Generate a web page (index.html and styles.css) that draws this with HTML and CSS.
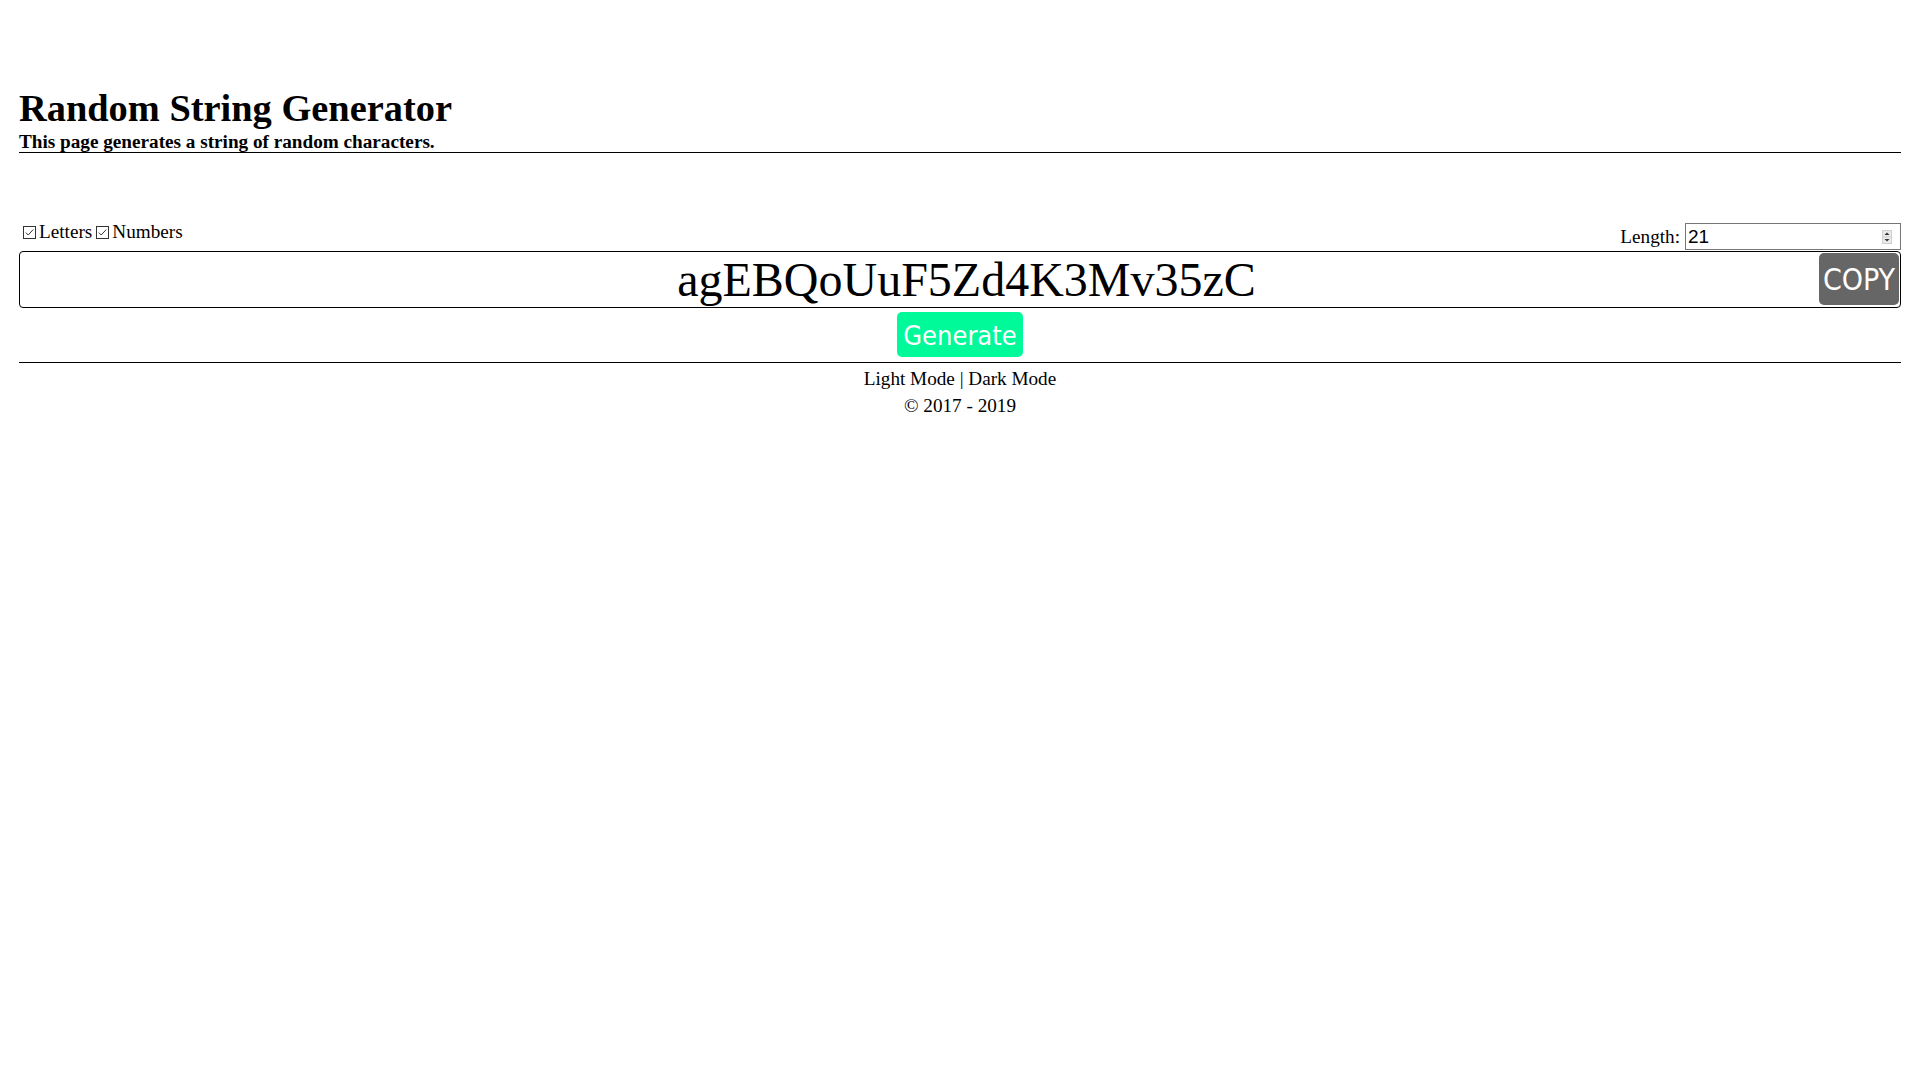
FILE: index.html
```html
<!DOCTYPE html>
<html lang="en">
<head>
<meta charset="utf-8">
<title>Random String Generator</title>
<link rel="stylesheet" href="styles.css">
</head>
<body>
<header class="page-header">
  <h1 class="title">Random String Generator</h1>
  <p class="subtitle">This page generates a string of random characters.</p>
</header>
<main class="generator">
  <div class="options-row">
    <div class="options">
      <label class="option"><span class="check"><svg width="13" height="13" viewBox="0 0 13 13"><rect x="0.5" y="0.5" width="12" height="12" fill="#fff" stroke="#333"/><path d="M2.8 6.6 L5.2 9 L10.2 3.6" fill="none" stroke="#333" stroke-width="1"/></svg></span>Letters</label>
      <label class="option"><span class="check"><svg width="13" height="13" viewBox="0 0 13 13"><rect x="0.5" y="0.5" width="12" height="12" fill="#fff" stroke="#333"/><path d="M2.8 6.6 L5.2 9 L10.2 3.6" fill="none" stroke="#333" stroke-width="1"/></svg></span>Numbers</label>
    </div>
    <div class="length">
      <span class="length-label">Length:</span>
      <div class="num-input">
        <span class="num-value">21</span>
        <span class="spinner"><svg width="10" height="14" viewBox="0 0 10 14"><rect x="0.5" y="0.5" width="9" height="13" fill="#eaeaea" stroke="#cfcfcf"/><line x1="0.5" y1="7" x2="9.5" y2="7" stroke="#cfcfcf"/><path d="M2.5 5 L5 2.5 L7.5 5 Z" fill="#333"/><path d="M2.5 9 L5 11.5 L7.5 9 Z" fill="#333"/></svg></span>
      </div>
    </div>
  </div>
  <div class="output-box">
    <span class="output-text">agEBQoUuF5Zd4K3Mv35zC</span>
    <button class="copy-btn">COPY</button>
  </div>
  <div class="generate-row">
    <button class="generate-btn">Generate</button>
  </div>
</main>
<footer class="page-footer">
  <div class="modes">Light Mode | Dark Mode</div>
  <div class="copyright">© 2017 - 2019</div>
</footer>
</body>
</html>
```
FILE: styles.css
```css
html, body {
  margin: 0;
  padding: 0;
  background: #fff;
}
body {
  padding: 0 19px;
  font-family: "Liberation Serif", "Times New Roman", serif;
  font-size: 19.2px;
  color: #000;
}
.page-header {
  padding-top: 86px;
  border-bottom: 1px solid #000;
}
.title {
  margin: 0;
  font-size: 38.4px;
  line-height: 44px;
  font-weight: bold;
}
.subtitle {
  margin: 0;
  padding-top: 1px;
  font-weight: bold;
  line-height: 21px;
}
.options-row {
  margin-top: 68px;
  display: flex;
  justify-content: space-between;
  align-items: flex-start;
  height: 29px;
}
.options {
  display: flex;
  line-height: 22px;
  padding-left: 4px;
}
.option {
  display: flex;
  align-items: baseline;
  margin-right: 4px;
}
.check {
  display: inline-block;
  width: 13px;
  height: 13px;
  margin-right: 3px;
  position: relative;
  top: 1px;
}
.check svg {
  display: block;
}
.length {
  display: flex;
  align-items: baseline;
  margin-top: 2px;
}
.length-label {
  margin-right: 5px;
}
.num-input {
  box-sizing: border-box;
  width: 216px;
  height: 27px;
  border: 1px solid #767676;
  display: flex;
  align-items: center;
  justify-content: space-between;
  padding: 0 8px 0 2px;
  font-family: "Liberation Sans", Arial, sans-serif;
  font-size: 19px;
}
.spinner svg {
  display: block;
}
.output-box {
  box-sizing: border-box;
  margin-top: 1px;
  height: 57px;
  border: 1px solid #000;
  border-radius: 4px;
  position: relative;
  text-align: center;
  padding-left: 13px;
}
.output-text {
  font-size: 48px;
  line-height: 55px;
}
.copy-btn {
  position: absolute;
  top: 1px;
  right: 1px;
  width: 80px;
  height: 52px;
  border: none;
  border-radius: 5px;
  background: #666;
  color: #fff;
  font-family: "DejaVu Sans Condensed", "DejaVu Sans", sans-serif;
  font-stretch: condensed;
  font-size: 30px;
  padding: 0;
}
.generate-row {
  display: flex;
  justify-content: center;
  margin-top: 4px;
  padding-bottom: 5px;
  border-bottom: 1px solid #000;
}
.generate-btn {
  width: 126px;
  height: 45px;
  border: none;
  border-radius: 5px;
  background: #00fa9a;
  color: #fff;
  font-family: "DejaVu Sans Condensed", "DejaVu Sans", sans-serif;
  font-stretch: condensed;
  font-size: 27px;
  padding: 2px 0 0;
}
.page-footer {
  padding-top: 2px;
  text-align: center;
  line-height: 27px;
}
```
